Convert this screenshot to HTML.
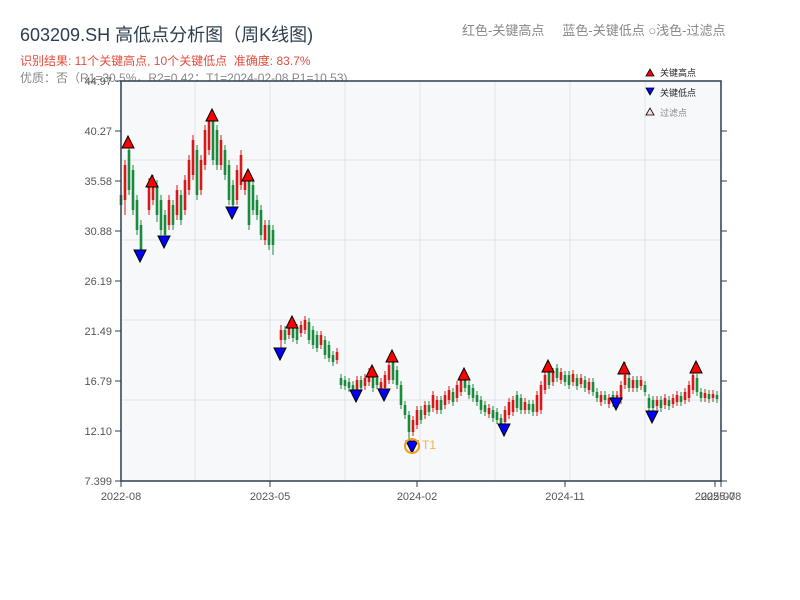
<!DOCTYPE html>
<html><head><meta charset="utf-8"><style>
html,body{margin:0;padding:0;background:#fff;width:800px;height:600px;overflow:hidden}
body{font-family:"Liberation Sans","Noto Sans CJK SC",sans-serif;position:relative}
.t{position:absolute;white-space:nowrap}
</style></head><body>
<div class="t" style="left:20px;top:21px;font-size:18px;color:#2c3e50">603209.SH 高低点分析图（周K线图)</div>
<div class="t" style="left:20px;top:52px;font-size:12px;color:#e74c3c">识别结果: 11个关键高点, 10个关键低点&nbsp;&nbsp;准确度: 83.7%</div>
<div class="t" style="left:20px;top:69px;font-size:12px;color:#888">优质：否（R1=30.5%，R2=0.42；T1=2024-02-08 P1=10.53)</div>
<div class="t" style="left:462px;top:20px;font-size:13px;color:#888">红色-关键高点&nbsp;&nbsp;&nbsp;&nbsp;&nbsp;蓝色-关键低点&nbsp;○浅色-过滤点</div>
<svg width="800" height="600" style="position:absolute;left:0;top:0" xmlns="http://www.w3.org/2000/svg" font-family="Liberation Sans, Noto Sans CJK SC, sans-serif">
<rect x="121" y="81" width="600" height="400" fill="#f7f8fa"/>
<g stroke="#e1e4e8">
<line x1="195" y1="81" x2="195" y2="481"/><line x1="270" y1="81" x2="270" y2="481"/><line x1="345" y1="81" x2="345" y2="481"/><line x1="420" y1="81" x2="420" y2="481"/><line x1="495" y1="81" x2="495" y2="481"/><line x1="570" y1="81" x2="570" y2="481"/><line x1="645" y1="81" x2="645" y2="481"/>
<line x1="121" y1="160" x2="721" y2="160"/><line x1="121" y1="240" x2="721" y2="240"/><line x1="121" y1="320" x2="721" y2="320"/><line x1="121" y1="400" x2="721" y2="400"/>
</g>
<path stroke="#d7191c" stroke-width="1" fill="none" d="M125 160V215M149 178V215M153 175V205M169 195V230M177 185V220M185 175V215M189 155V195M193 135V180M201 155V195M205 125V170M209 115V155M221 135V170M237 165V205M241 150V190M245 175V195M265 220V245
M281 325V348M289 321V339M301 321V337M305 316V334M321 331V349M337 348V364M357 376V394M365 374V390M369 368V386M381 378V396M385 371V392M389 361V384M413 416V436M417 406V429M425 401V419M433 391V412M437 396V414M445 391V409M449 386V404M457 381V402M461 374V396M489 404V418M505 406V426M509 398V419M513 396V416M525 398V414M537 391V416M541 381V414M545 371V394M553 368V386M561 368V384M573 370V386M581 374V388M589 378V394M601 391V406M609 394V408M617 391V406M621 381V404M625 362V389M633 376V392M641 376V390M657 396V410M665 394V409M673 394V408M677 391V406M685 388V404M689 381V402M693 371V394M705 389V402M713 390V402"/>
<path stroke="#d7191c" stroke-width="2.6" fill="none" d="M125 165V200M149 185V210M153 180V200M169 200V225M177 190V215M185 180V210M189 160V190M193 140V175M201 160V190M205 130V165M209 120V150M221 140V165M237 170V200M241 155V185M245 180V190M265 225V240
M281 330V340M289 325V335M301 325V333M305 320V330M321 335V345M337 352V360M357 380V390M365 378V386M369 372V382M381 382V392M385 375V388M389 365V380M413 420V432M417 410V425M425 405V415M433 395V408M437 400V410M445 395V405M449 390V400M457 385V398M461 378V392M489 408V414M505 410V422M509 402V415M513 400V412M525 402V410M537 395V412M541 385V410M545 375V390M553 372V382M561 372V380M573 374V382M581 378V384M589 382V390M601 395V402M609 398V404M617 395V402M621 385V400M625 375V385M633 380V388M641 380V386M657 400V406M665 398V405M673 398V404M677 395V402M685 392V400M689 385V398M693 375V390M705 393V398M713 394V398"/>
<path stroke="#1a8a3c" stroke-width="1" fill="none" d="M121 188V212M129 145V195M133 165V215M137 195V235M141 220V252M157 180V222M161 195V235M165 210V240M173 200V230M181 190V225M197 145V200M213 118V165M217 125V170M225 145V180M229 160V205M233 180V210M249 175V230M253 180V215M257 195V220M261 205V240M269 220V250M273 225V255
M285 326V344M293 318V342M297 324V344M309 318V344M313 326V349M317 331V352M325 336V359M329 341V362M333 351V366M341 374V389M345 376V390M349 378V392M353 381V396M361 376V392M373 371V392M377 374V389M393 356V384M397 366V389M401 381V409M405 401V419M409 411V440M421 406V424M429 401V416M441 396V414M453 388V406M465 374V392M469 381V399M473 384V402M477 391V406M481 396V414M485 401V416M493 406V422M497 408V424M501 414V429M517 391V412M521 394V414M529 400V414M533 400V416M549 366V389M557 364V382M565 371V386M569 371V389M577 374V390M585 376V392M593 378V396M597 388V402M605 391V404M613 391V407M629 374V392M637 376V392M645 381V396M649 394V412M653 396V412M661 396V412M669 396V410M681 392V406M697 374V396M701 388V402M709 390V403M717 391V403"/>
<path stroke="#1a8a3c" stroke-width="2.6" fill="none" d="M121 195V205M129 150V190M133 170V210M137 200V230M141 225V250M157 185V215M161 200V230M165 215V235M173 205V225M181 195V220M197 150V195M213 120V160M217 130V165M225 150V175M229 165V200M233 185V205M249 180V225M253 185V210M257 200V215M261 210V235M269 225V245M273 230V245
M285 330V340M293 322V338M297 328V340M309 322V340M313 330V345M317 335V348M325 340V355M329 345V358M333 355V362M341 378V385M345 380V386M349 382V388M353 385V392M361 380V388M373 375V388M377 378V385M393 360V380M397 370V385M401 385V405M405 405V415M409 415V432M421 410V420M429 405V412M441 400V410M453 392V402M465 378V388M469 385V395M473 388V398M477 395V402M481 400V410M485 405V412M493 410V418M497 412V420M501 418V425M517 395V408M521 398V410M529 404V410M533 404V412M549 370V385M557 368V378M565 375V382M569 375V385M577 378V386M585 380V388M593 382V392M597 392V398M605 395V400M613 395V403M629 378V388M637 380V388M645 385V392M649 398V408M653 400V408M661 400V408M669 400V406M681 396V402M697 378V392M701 392V398M709 394V399M717 395V399"/>
<g fill="#f00" stroke="#000" stroke-width="1">
<polygon points="122,148 134,148 128,136"/><polygon points="146,187 158,187 152,175"/><polygon points="206,121 218,121 212,109"/><polygon points="242,181 254,181 248,169"/><polygon points="286,328 298,328 292,316"/><polygon points="366,377 378,377 372,365"/><polygon points="386,362 398,362 392,350"/><polygon points="458,380 470,380 464,368"/><polygon points="542,372 554,372 548,360"/><polygon points="618,374 630,374 624,362"/><polygon points="690,373 702,373 696,361"/>
</g>
<g fill="#00f" stroke="#000" stroke-width="1">
<polygon points="134,250 146,250 140,262"/><polygon points="158,236 170,236 164,248"/><polygon points="226,207 238,207 232,219"/><polygon points="274,348 286,348 280,360"/><polygon points="350,390 362,390 356,402"/><polygon points="378,389 390,389 384,401"/><polygon points="406,441 418,441 412,453"/><polygon points="498,424 510,424 504,436"/><polygon points="610,398 622,398 616,410"/><polygon points="646,411 658,411 652,423"/>
</g>
<circle cx="412" cy="446" r="7" fill="none" stroke="#f39c12" stroke-width="2"/>
<text x="422" y="449" font-size="12" fill="#f5b041">T1</text>
<rect x="121" y="81" width="600" height="400" fill="none" stroke="#2c3e50" stroke-width="1.5"/>
<g stroke="#2c3e50">
<path d="M115 81H121M115 131H121M115 181H121M115 231H121M115 281H121M115 331H121M115 381H121M115 431H121M115 481H121M721 131H727M721 181H727M721 231H727M721 281H727M721 331H727M721 381H727M721 431H727M721 481H727M121 481V487M270 481V487M417 481V487M565 481V487M715 481V487M721 481V487"/>
</g>
<g font-size="11" fill="#555" text-anchor="end">
<text x="112" y="85">44.97</text><text x="112" y="135">40.27</text><text x="112" y="185">35.58</text><text x="112" y="235">30.88</text><text x="112" y="285">26.19</text><text x="112" y="335">21.49</text><text x="112" y="385">16.79</text><text x="112" y="435">12.10</text><text x="112" y="485">7.399</text>
</g>
<g font-size="11" fill="#555" text-anchor="middle">
<text x="121" y="500">2022-08</text><text x="270" y="500">2023-05</text><text x="417" y="500">2024-02</text><text x="565" y="500">2024-11</text><text x="715" y="500">2025-07</text><text x="721" y="500">2025-08</text>
</g>
<polygon points="646,76 654,76 650,69" fill="#f00" stroke="#000" stroke-width="0.8"/><text x="660" y="76" font-size="9" fill="#222">关键高点</text>
<polygon points="646,88 654,88 650,95" fill="#00f" stroke="#000" stroke-width="0.8"/><text x="660" y="96" font-size="9" fill="#222">关键低点</text>
<polygon points="646,115 654,115 650,108" fill="#fdd" stroke="#000" stroke-width="0.8"/><text x="660" y="116" font-size="9" fill="#888">过滤点</text>
</svg>
</body></html>
